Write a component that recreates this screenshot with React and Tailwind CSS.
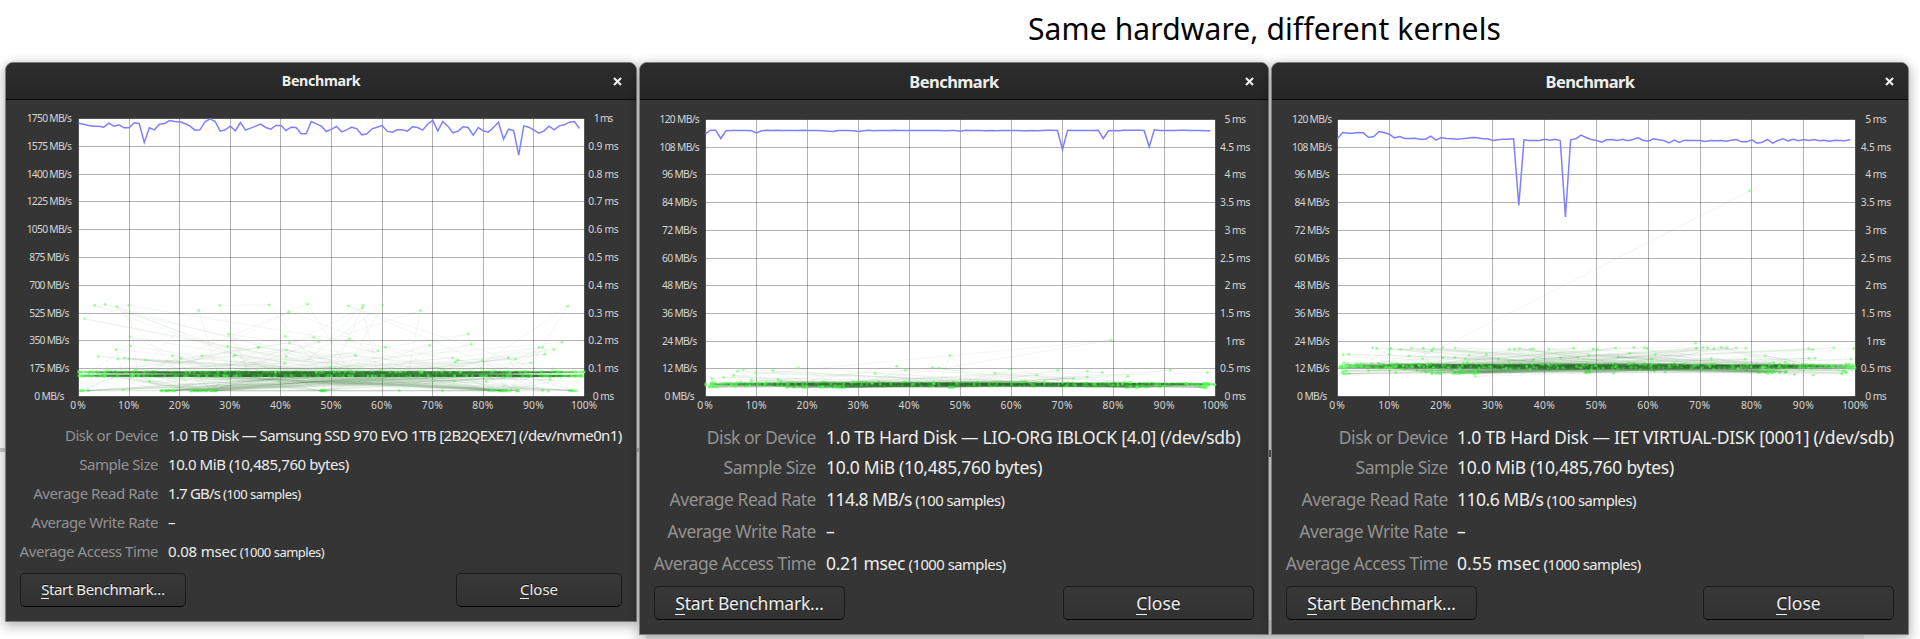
import React from "react";

const seeded = (seed) => () => {
  seed = (seed * 1664525 + 1013904223) % 4294967296;
  return seed / 4294967296;
};

// Read-rate traces: 100 samples each, measured downwards from the top of the plot in thirds of a pixel.
const NVME_RATE = [
  14, 17, 21, 23, 23, 26, 14, 23, 19, 28, 28, 13, 15, 72, 28, 34, 17, 15, 6, 9, 10, 15, 22, 35, 34, 10, 1, 9, 38, 34,
  23, 37, 12, 35, 29, 23, 17, 27, 32, 21, 21, 36, 26, 27, 46, 46, 9, 16, 23, 39, 32, 24, 40, 34, 26, 31, 49, 46, 31, 26,
  21, 38, 41, 34, 34, 38, 25, 27, 35, 17, 5, 38, 9, 23, 43, 38, 25, 27, 50, 27, 37, 41, 27, 11, 62, 32, 36, 110, 22, 26,
  35, 44, 37, 23, 34, 22, 19, 11, 9, 30,
];
const LIO_RATE = [
  42, 32, 32, 57, 34, 33, 33, 33, 33, 34, 40, 34, 32, 33, 32, 33, 33, 33, 33, 32, 33, 33, 33, 34, 35, 36, 33, 33, 33, 34,
  36, 34, 32, 34, 33, 33, 33, 32, 33, 33, 33, 33, 33, 33, 33, 33, 33, 34, 33, 33, 35, 32, 33, 33, 33, 34, 33, 34, 33, 33,
  33, 33, 34, 34, 33, 34, 33, 32, 32, 33, 90, 32, 33, 33, 33, 33, 33, 32, 57, 34, 33, 34, 32, 32, 32, 32, 33, 82, 31, 33,
  33, 33, 33, 32, 32, 33, 33, 33, 34, 34,
];
const IET_RATE = [
  57, 39, 41, 41, 39, 40, 54, 51, 36, 39, 44, 55, 51, 57, 57, 56, 59, 59, 50, 62, 54, 57, 58, 59, 58, 56, 54, 55, 58, 58,
  63, 61, 59, 59, 58, 258, 61, 63, 63, 63, 59, 62, 59, 63, 292, 61, 58, 47, 54, 60, 63, 68, 61, 60, 63, 59, 64, 60, 55,
  62, 65, 58, 61, 63, 70, 62, 69, 62, 63, 63, 63, 66, 63, 64, 63, 65, 62, 60, 67, 67, 61, 71, 68, 60, 71, 63, 58, 64, 59,
  64, 60, 63, 60, 64, 62, 65, 62, 63, 64, 60,
];

// Isolated access-time samples: [percent of disk, pixels above the zero line].
const shift = (x0, y0, w, pairs) => pairs.map(([x, y]) => [((x - x0) / w) * 100, (y0 - y) / 3]);
const NVME_OUT = shift(25, 304, 1518, [
  [73, 31], [105, 28], [140, 34], [176, 31], [43, 71], [386, 46], [449, 31], [597, 29], [712, 27], [656, 50], [835, 32],
  [879, 31], [877, 38], [938, 29], [1051, 46], [1493, 33], [179, 125], [476, 117], [472, 154], [182, 152], [645, 124],
  [658, 143], [731, 127], [746, 139], [838, 131], [1195, 116], [1204, 147], [1079, 151], [1476, 141], [1406, 157],
  [1418, 157], [1451, 163], [1424, 177], [138, 163], [84, 184], [142, 191], [163, 188], [176, 191], [226, 195], [307, 182],
  [332, 190], [395, 182], [495, 180], [491, 182], [563, 157], [567, 157], [648, 164], [648, 184], [644, 204], [856, 181],
  [924, 167], [946, 156], [1147, 188], [1156, 201], [1163, 195], [1237, 195], [1315, 187], [1336, 192], [1383, 203],
  [780, 216], [110, 221], [196, 223], [930, 223], [1233, 220], [1448, 221], [238, 259], [628, 257], [1091, 256], [1153, 258],
  [1249, 259], [1440, 254], [987, 286], [1117, 286], [158, 284], [1340, 286], [1435, 288], [1418, 286],
]);
const LIO_OUT = shift(17, 185, 1529, [
  [1233, 16], [750, 62], [295, 99], [591, 94], [616, 106], [697, 98], [718, 100], [928, 103], [1073, 106], [1162, 109],
  [1207, 113], [1411, 106], [1522, 113], [1283, 125], [1010, 121], [885, 115], [525, 116], [219, 107], [168, 114],
  [130, 104], [112, 109], [101, 122], [71, 128], [36, 131], [1161, 127], [1120, 131], [234, 134], [154, 136],
]);
const IET_OUT = shift(8, 185, 1553, [
  [1081, 25], [114, 39], [126, 41], [167, 40], [165, 43], [197, 43], [229, 40], [265, 40], [295, 41], [291, 47], [323, 38],
  [360, 39], [523, 44], [538, 43], [553, 41], [587, 43], [595, 42], [641, 43], [716, 40], [775, 43], [787, 44], [842, 39],
  [897, 38], [928, 38], [936, 41], [884, 55], [961, 59], [1084, 41], [1104, 38], [1117, 39], [1137, 42], [1158, 38],
  [1176, 38], [1204, 39], [1233, 40], [1421, 41], [1433, 44], [1496, 39], [1556, 41], [1290, 63], [25, 60], [42, 58],
  [163, 59], [222, 64], [263, 72], [325, 69], [360, 68], [403, 62], [391, 72], [454, 59], [490, 73], [676, 69], [729, 68],
  [761, 62], [849, 66], [1128, 71], [1231, 73], [1422, 71], [1440, 70], [1548, 73], [596, 75], [950, 73], [421, 125],
  [1434, 121], [1378, 119], [836, 115], [991, 112], [315, 115], [183, 113], [27, 117],
]);

// Stretches of the disk that answer faster than the rest.
const FAST = [[0.2, 2.4, 7], [15.8, 20, 15], [22, 27.5, 30], [47.8, 49, 12], [81, 83, 5], [83, 85.5, 16], [86, 87, 4], [97, 98.5, 7]];

function buildSamples(kind) {
  const r = seeded(kind === "nvme" ? 11 : kind === "lio" ? 29 : 47);
  const bell = () => (r() + r() + r() - 1.5) / 1.5;
  const out = (kind === "nvme" ? NVME_OUT : kind === "lio" ? LIO_OUT : IET_OUT).slice();
  FAST.forEach(([a, b, n]) => {
    for (let i = 0; i < n; i++) {
      const h = kind === "nvme" ? 5.8 : kind === "lio" ? 8.8 + r() * 1.2 : 24.5 + bell() * 3.5;
      out.push([a + (b - a) * r(), h]);
    }
  });
  while (out.length < 1000) {
    const x = r() * 100;
    let h;
    if (kind === "nvme") h = (r() < 0.4 ? 24.4 : 20.6) + bell() * 0.6;
    else if (kind === "lio") h = 12.3 + bell() * (r() < 0.3 ? 3.6 : 1.2);
    else h = 30.2 + bell() * (r() < 0.35 ? 5 : 3);
    out.push([x, h]);
  }
  for (let i = out.length - 1; i > 0; i--) {
    const j = Math.floor(r() * (i + 1));
    [out[i], out[j]] = [out[j], out[i]];
  }
  return out;
}

function Chart({ left, width, plot, yCenter, msCenter, rates, times, rate, kind, longLines }) {
  const [x0, y0, x1, y1] = plot;
  const w = x1 - x0;
  const h = y1 - y0;
  const samples = buildSamples(kind).map(([x, y]) => [x0 + (x / 100) * w, y1 - y]);
  const marks = Array.from({ length: 11 }, (_, i) => i);
  return (
    <svg
      className="block h-[321px] w-full shrink-0"
      viewBox={`${left} 100 ${width} 321`}
      preserveAspectRatio="none"
      fontFamily='"Noto Sans", "Open Sans", sans-serif'
      fontSize="10.3"
      fill="#d6d6d4"
      textAnchor="middle"
    >
      <rect x={x0} y={y0} width={w} height={h} fill="#fff" />
      {marks.map((i) => {
        const gx = Math.floor(x0 + (w * i) / 10) + 0.5;
        const gy = Math.floor(y0 + (h * i) / 10) + 0.5;
        return (
          <g key={i} stroke="#000" strokeOpacity={i === 0 || i === 10 ? 0.45 : 0.3} strokeWidth="1">
            <line x1={gx} x2={gx} y1={y0} y2={y1} />
            <line x1={x0} x2={x1} y1={gy} y2={gy} />
          </g>
        );
      })}
      {longLines.map(([a, b, c, d], i) => (
        <line key={i} x1={a} y1={b} x2={c} y2={d} stroke="#478547" strokeOpacity="0.09" strokeWidth="0.9" />
      ))}
      {samples.map(([x, y], i) => (
        <g key={i}>
          {i > 0 && (
            <line
              x1={samples[i - 1][0]}
              y1={samples[i - 1][1]}
              x2={x}
              y2={y}
              stroke="#478547"
              strokeOpacity="0.07"
              strokeWidth="0.9"
            />
          )}
          <circle cx={x} cy={y} r="1.45" fill="#5cff5c" fillOpacity="0.55" />
        </g>
      ))}
      {kind === "iet" && <circle cx="1749.5" cy="191" r="1.45" fill="#5cff5c" fillOpacity="0.55" />}
      <polyline
        fill="none"
        stroke="#8080ff"
        strokeWidth="1.5"
        strokeLinejoin="miter"
        points={rate.map((v, i) => `${x0 + (w * i) / 100},${y0 + v / 3}`).join(" ")}
      />
      {rates.map((t, i) => (
        <text key={t} x={yCenter} y={y0 + (h * i) / 10 + 3.5} textLength={25.2 + t.length * 5}>
          {t} MB/s
        </text>
      ))}
      {times.map((t, i) => (
        <text key={t} x={msCenter} y={y0 + (h * i) / 10 + 3.5} textLength={t.includes(".") ? 30.5 : t === "1" ? 19.5 : 21.5}>
          {t} ms
        </text>
      ))}
      {marks.map((i) => (
        <text key={i} x={x0 + (w * i) / 10 - 0.5} y="409.2" textLength={i === 0 ? 15.5 : i === 10 ? 26 : 21}>
          {i * 10}%
        </text>
      ))}
    </svg>
  );
}

function Button({ first, rest, className }) {
  return (
    <button
      className={`h-[34px] rounded-[5px] border border-b-black border-[#1b1b1b] bg-linear-to-b from-[#383838] to-[#313131] text-[#eeeeec] [text-shadow:0_-1px_rgba(0,0,0,0.7)] ${className}`}
    >
      <span className="inline-block h-[1.15em] border-b border-current leading-none">{first}</span>
      {rest}
    </button>
  );
}

function Dialog({ win }) {
  return (
    <section
      className={`relative flex flex-col rounded-t-[8px] border border-[#7d7d7d] bg-[#353535] shadow-[0_3px_12px_1px_rgba(0,0,0,0.3)] ${win.box}`}
    >
      <header
        className={`grid h-[37px] shrink-0 grid-cols-[40px_1fr_40px] items-center rounded-t-[7px] border-b border-[#070707] bg-linear-to-b from-[#2d2d2d] to-[#262626] font-bold text-[#eeeeec] ${win.title}`}
      >
        <span />
        <h2 className={`text-center ${win.heading}`}>Benchmark</h2>
        <svg className={`h-[9px] w-[9px] justify-self-end ${win.close}`} viewBox="0 0 9 9" stroke="#eeeeec" strokeWidth="2.1">
          <path d="M1 1 8 8M8 1 1 8" />
        </svg>
      </header>
      <Chart {...win.chart} />
      <dl className={`grid whitespace-nowrap ${win.rows}`}>
        {win.info.map(([label, value, tracking, note]) => (
          <React.Fragment key={label}>
            <dt className={`text-right text-[#929292] ${win.label}`}>{label}</dt>
            <dd className="text-[#eeeeec]">
              <span className={tracking}>{value}</span>
              {note && <span className={`leading-none ${win.note}`}> {note}</span>}
            </dd>
          </React.Fragment>
        ))}
      </dl>
      <div className={`mt-[7px] flex justify-between ${win.actions}`}>
        <Button first="S" rest="tart Benchmark…" className={`${win.button} ${win.startText}`} />
        <Button first="C" rest="lose" className={win.button} />
      </div>
    </section>
  );
}

const MS5 = ["5", "4.5", "4", "3.5", "3", "2.5", "2", "1.5", "1", "0.5", "0"];
const MB120 = ["120", "108", "96", "84", "72", "60", "48", "36", "24", "12", "0"];

const WINDOWS = [
  {
    id: "nvme",
    box: "w-[632px] h-[560px]",
    title: "text-[14.25px]",
    heading: "-mt-[1px] tracking-[-0.34px]",
    close: "mr-[14px]",
    rows: "grid-cols-[152px_1fr] auto-rows-[29px] gap-x-[10px] text-[15px] leading-[29px]",
    label: "tracking-[-0.45px]",
    note: "text-[13px] tracking-[-0.5px]",
    actions: "pl-[14px] pr-[14px]",
    button: "w-[166px] text-[15px] pb-[2px]",
    startText: "tracking-[-0.4px]",
    chart: {
      left: 6, width: 630, plot: [78.5, 118.5, 584.5, 396.5], yCenter: 49.3, msCenter: 603.5, kind: "nvme", rate: NVME_RATE, longLines: [],
      rates: ["1750", "1575", "1400", "1225", "1050", "875", "700", "525", "350", "175", "0"],
      times: ["1", "0.9", "0.8", "0.7", "0.6", "0.5", "0.4", "0.3", "0.2", "0.1", "0"],
    },
    info: [
      ["Disk or Device", "1.0 TB Disk — Samsung SSD 970 EVO 1TB [2B2QEXE7] (/dev/nvme0n1)", "tracking-[-0.595px]"],
      ["Sample Size", "10.0 MiB (10,485,760 bytes)", "tracking-[-0.41px]"],
      ["Average Read Rate", "1.7 GB/s", "tracking-[-0.8px]", "(100 samples)"],
      ["Average Write Rate", "–", "tracking-normal"],
      ["Average Access Time", "0.08 msec", "tracking-[-0.2px]", "(1000 samples)"],
    ],
  },
  {
    id: "lio",
    box: "w-[630px] h-[573px]",
    title: "text-[16.5px]",
    heading: "mt-[2px] tracking-[-0.55px]",
    close: "mr-[14px]",
    rows: "grid-cols-[176px_1fr] grid-rows-[30px_32px_32px_32px_32px] gap-x-[10px] text-[17.5px] leading-[32px]",
    label: "tracking-[-0.48px]",
    note: "text-[14.8px] tracking-[-0.5px]",
    actions: "pl-[14px] pr-[14px]",
    button: "w-[191px] text-[17.5px]",
    startText: "tracking-[-0.2px]",
    chart: {
      left: 640, width: 628, plot: [705.5, 119.5, 1215.5, 396.5], yCenter: 679.6, msCenter: 1235.3, kind: "lio", rate: LIO_RATE,
      longLines: [],
      rates: MB120, times: MS5,
    },
    info: [
      ["Disk or Device", "1.0 TB Hard Disk — LIO-ORG IBLOCK [4.0] (/dev/sdb)", "tracking-[-0.26px]"],
      ["Sample Size", "10.0 MiB (10,485,760 bytes)", "tracking-[-0.29px]"],
      ["Average Read Rate", "114.8 MB/s", "tracking-[-0.55px]", "(100 samples)"],
      ["Average Write Rate", "–", "tracking-normal"],
      ["Average Access Time", "0.21 msec", "tracking-[-0.35px]", "(1000 samples)"],
    ],
  },
  {
    id: "iet",
    box: "w-[638px] h-[573px]",
    title: "text-[16.5px]",
    heading: "mt-[2px] tracking-[-0.6px]",
    close: "mr-[14px]",
    rows: "grid-cols-[176px_1fr] grid-rows-[30px_32px_32px_32px_32px] gap-x-[9px] text-[17.5px] leading-[32px]",
    label: "tracking-[-0.48px]",
    note: "text-[14.8px] tracking-[-0.5px]",
    actions: "pl-[14px] pr-[14px]",
    button: "w-[191px] text-[17.5px]",
    startText: "tracking-[-0.2px]",
    chart: {
      left: 1272, width: 636, plot: [1337.5, 119.5, 1855.5, 396.5], yCenter: 1312.2, msCenter: 1876, kind: "iet", rate: IET_RATE,
      longLines: [[1749.5, 191, 1441, 348]],
      rates: MB120, times: MS5,
    },
    info: [
      ["Disk or Device", "1.0 TB Hard Disk — IET VIRTUAL-DISK [0001] (/dev/sdb)", "tracking-[-0.24px]"],
      ["Sample Size", "10.0 MiB (10,485,760 bytes)", "tracking-[-0.26px]"],
      ["Average Read Rate", "110.6 MB/s", "tracking-[-0.5px]", "(100 samples)"],
      ["Average Write Rate", "–", "tracking-normal"],
      ["Average Access Time", "0.55 msec", "tracking-[0.1px]", "(1000 samples)"],
    ],
  },
];

export default function App() {
  return (
    <main className="relative h-[639px] w-[1920px] overflow-hidden bg-white font-['Noto_Sans','Open_Sans',sans-serif]">
      <div className="absolute top-[448px] left-0 h-[4px] w-[700px] bg-[#c9c9c9]" />
      <div className="absolute top-[450px] left-[1260px] h-[7px] w-[20px] bg-[#666]" />
      <div className="absolute top-[620px] left-[646px] h-[19px] w-[1218px] bg-[#ebebeb]" />
      <h1 className="h-[62px] pl-[1028px] text-[30px] leading-[57px] tracking-[0.12px] whitespace-nowrap text-black">
        Same hardware, different kernels
      </h1>
      <div className="flex items-start gap-[2px] pl-[5px]">
        {WINDOWS.map((win) => (
          <Dialog key={win.id} win={win} />
        ))}
      </div>
    </main>
  );
}
